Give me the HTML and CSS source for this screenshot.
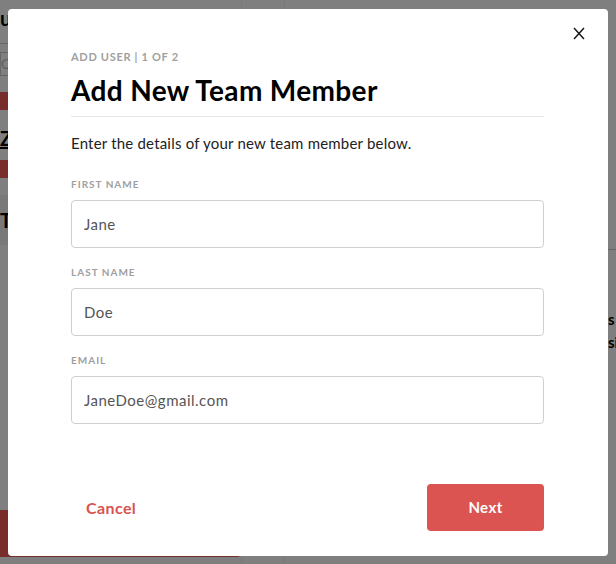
FILE: index.html
```html
<!DOCTYPE html>
<html lang="en">
<head>
<meta charset="utf-8">
<title>Add New Team Member</title>
<link rel="stylesheet" href="styles.css">
</head>
<body>
<div class="page">
  <aside class="sidebar">
    <div class="side-head">ur</div>
    <div class="side-search">Q</div>
    <div class="side-band"></div>
    <div class="side-item">Z</div>
    <div class="side-band second"></div>
    <div class="side-group"><span>T</span></div>
    <div class="side-spacer"></div>
    <div class="side-button"></div>
  </aside>
  <div class="gutter"></div>
  <main class="main">
    <div class="main-head"></div>
    <div class="main-body">
      <p class="main-text">s</p>
      <p class="main-text">si</p>
    </div>
  </main>
</div>

<div class="overlay">
  <section class="modal" role="dialog" aria-labelledby="modal-title">
    <button class="close" aria-label="Close">
      <svg width="12" height="13" viewBox="0 0 12 13"><path d="M1 1 L11 12 M11 1 L1 12" stroke="#111" stroke-width="1.4" fill="none"/></svg>
    </button>
    <div class="eyebrow">ADD USER | 1 OF 2</div>
    <h1 class="title" id="modal-title">Add New Team Member</h1>
    <p class="intro">Enter the details of your new team member below.</p>
    <form class="form">
      <label class="field">
        <span class="label">FIRST NAME</span>
        <input class="input" type="text" value="Jane">
      </label>
      <label class="field">
        <span class="label">LAST NAME</span>
        <input class="input" type="text" value="Doe">
      </label>
      <label class="field">
        <span class="label">EMAIL</span>
        <input class="input" type="text" value="JaneDoe@gmail.com">
      </label>
    </form>
    <div class="footer">
      <button class="btn-cancel" type="button">Cancel</button>
      <button class="btn-next" type="button">Next</button>
    </div>
  </section>
</div>
</body>
</html>
```

FILE: styles.css
```css
* { box-sizing: border-box; }
html, body { margin: 0; padding: 0; }
body {
  width: 616px;
  height: 564px;
  overflow: hidden;
  font-family: Lato, "Noto Sans", sans-serif;
  background: #fff;
}

/* underlying page */
.page {
  display: flex;
  height: 564px;
}
.sidebar {
  width: 241px;
  flex-shrink: 0;
  display: flex;
  flex-direction: column;
  background: #fff;
}
.side-head {
  height: 44px;
  padding: 6px 0 0 0;
  font-weight: 700;
  font-size: 20px;
  border-bottom: 1px solid #ccc;
  color: #000;
}
.side-search {
  margin: 8px 0 0;
  height: 24px;
  font-size: 14px;
  color: #bbb;
  border: 1px solid #ccc;
  padding: 2px 0;
}
.side-band {
  height: 18px;
  margin-top: 16px;
  background: #f05a5a;
}
.side-band.second { margin-top: 10px; }
.side-item {
  margin-top: 16px;
  font-size: 20px;
  line-height: 24px;
  font-weight: 700;
  color: #000;
  text-decoration: underline;
}
.side-group {
  margin-top: 17px;
  height: 50px;
  background: #f2f2f2;
  display: flex;
  align-items: center;
  font-size: 20px;
  font-weight: 700;
}
.side-spacer { flex: 1; }
.side-button {
  height: 47px;
  margin-bottom: 7px;
  background: #f05a5a;
  border-radius: 0 0 4px 0;
}
.gutter {
  width: 44px;
  flex-shrink: 0;
  border-left: 1px solid #f2f2f2;
  border-right: 1px solid #f2f2f2;
  background: #fff;
}
.main {
  flex: 1;
  min-width: 0;
  overflow: hidden;
  display: flex;
  flex-direction: column;
}
.main-head {
  height: 250px;
  border-bottom: 1px solid #ccc;
}
.main-body {
  padding: 58px 0 0 323px;
  white-space: nowrap;
}
.main-text {
  margin: 0;
  font-size: 15px;
  font-weight: 700;
  line-height: 23px;
  color: #000;
}

/* overlay + modal */
.overlay {
  position: fixed;
  inset: 0;
  background: rgba(0, 0, 0, 0.5);
  display: flex;
  align-items: center;
  justify-content: center;
}
.modal {
  position: relative;
  width: 600px;
  height: 547px;
  background: #fff;
  border-radius: 4px;
  padding: 41px 64px 0 63px;
  display: flex;
  flex-direction: column;
}
.close {
  position: absolute;
  top: 17px;
  right: 21px;
  width: 16px;
  height: 16px;
  padding: 0;
  border: 0;
  background: none;
  display: flex;
  align-items: center;
  justify-content: center;
}
.eyebrow {
  font-size: 11px;
  line-height: 14px;
  font-weight: 700;
  letter-spacing: 0.7px;
  color: #a0a0a0;
}
.title {
  margin: 10px 0 0;
  padding-bottom: 10px;
  border-bottom: 1px solid #e6e6e6;
  font-size: 28px;
  line-height: 32px;
  font-weight: 700;
  letter-spacing: 0.35px;
  color: #000;
}
.intro {
  margin: 16px 0 0;
  font-size: 15px;
  line-height: 20px;
  letter-spacing: 0.2px;
  color: #222;
}
.form {
  display: flex;
  flex-direction: column;
  gap: 17px;
  margin-top: 24px;
}
.field {
  display: flex;
  flex-direction: column;
  gap: 9px;
}
.label {
  font-size: 10px;
  line-height: 14px;
  font-weight: 700;
  letter-spacing: 1px;
  color: #a0a0a0;
}
.input {
  height: 48px;
  border: 1px solid #cfcfcf;
  border-radius: 4px;
  padding: 0 12px;
  font-family: Lato, "Noto Sans", sans-serif;
  font-size: 15px;
  letter-spacing: 0.5px;
  color: #555;
  background: #fff;
  outline: none;
}
.footer {
  margin-top: 60px;
  display: flex;
  justify-content: space-between;
  align-items: center;
}
.btn-cancel {
  border: 0;
  background: none;
  padding: 0 15px;
  font-family: Lato, "Noto Sans", sans-serif;
  font-size: 16px;
  font-weight: 700;
  letter-spacing: 0.4px;
  color: #d9534f;
}
.btn-next {
  width: 117px;
  height: 47px;
  border: 0;
  border-radius: 4px;
  background: #db5451;
  color: #fff;
  font-family: Lato, "Noto Sans", sans-serif;
  font-size: 15px;
  font-weight: 700;
  letter-spacing: 0.4px;
}
```
